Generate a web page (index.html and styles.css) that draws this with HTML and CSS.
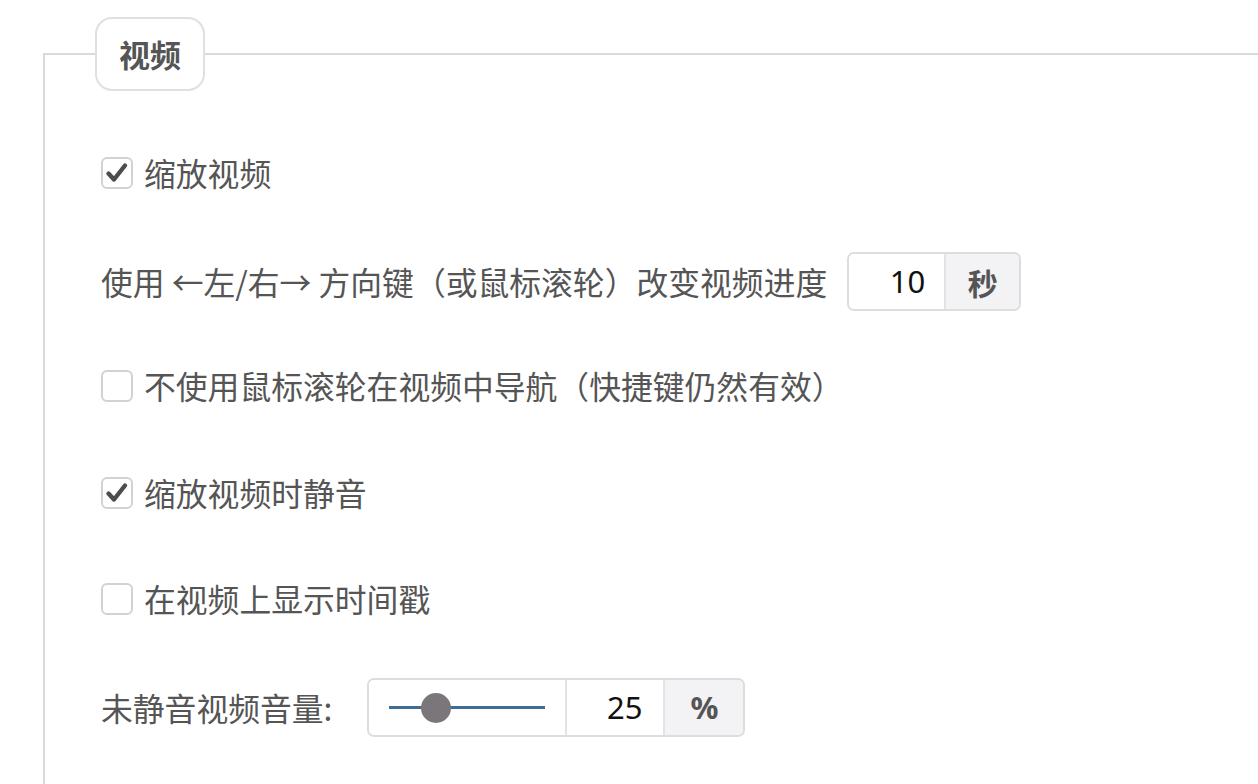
FILE: index.html
```html
<!DOCTYPE html>
<html lang="zh-CN">
<head>
<meta charset="utf-8">
<title>视频</title>
<link rel="stylesheet" href="styles.css">
</head>
<body>
<fieldset class="group">
  <legend class="group-title">视频</legend>
  <div class="rows">
    <label class="row">
      <span class="check checked"><svg viewBox="0 0 32 32" width="32" height="32"><path d="M7.5 16.5 L13 22.5 L24 8.5" fill="none" stroke="#4d4d4d" stroke-width="4.4" stroke-linecap="round" stroke-linejoin="round"/></svg></span>
      <span class="text">缩放视频</span>
    </label>
    <div class="row row-input">
      <span class="text">使用 ←左/右→ 方向键（或鼠标滚轮）改变视频进度</span>
      <span class="input-group seek-group">
        <span class="num num-seek">10</span>
        <span class="unit">秒</span>
      </span>
    </div>
    <label class="row">
      <span class="check"></span>
      <span class="text">不使用鼠标滚轮在视频中导航（快捷键仍然有效）</span>
    </label>
    <label class="row">
      <span class="check checked"><svg viewBox="0 0 32 32" width="32" height="32"><path d="M7.5 16.5 L13 22.5 L24 8.5" fill="none" stroke="#4d4d4d" stroke-width="4.4" stroke-linecap="round" stroke-linejoin="round"/></svg></span>
      <span class="text">缩放视频时静音</span>
    </label>
    <label class="row">
      <span class="check"></span>
      <span class="text">在视频上显示时间戳</span>
    </label>
    <div class="row row-input">
      <span class="text vol-label">未静音视频音量:</span>
      <span class="input-group vol-group">
        <span class="slider-cell"><input class="slider" type="range" min="0" max="100" value="25"></span>
        <span class="num num-vol">25</span>
        <span class="unit unit-pct">%</span>
      </span>
    </div>
  </div>
</fieldset>
</body>
</html>
```

FILE: styles.css
```css
html, body {
  margin: 0;
  padding: 0;
  background: #ffffff;
}
body {
  font-family: "Noto Sans CJK SC", "Noto Sans", sans-serif;
  color: #555555;
  overflow: hidden;
  height: 784px;
}
.group {
  margin: 17px -40px 0 43px;
  border: 2px solid #d9d8da;
  border-right: none;
  border-bottom: none;
  padding: 52px 0 40px 56px;
  height: 800px;
  box-sizing: border-box;
}
.group-title {
  margin-left: -6px;
  padding: 0 22px;
  height: 70px;
  border: 2px solid #e0dfe1;
  border-radius: 17px;
  background: #fff;
  font-size: 31px;
  font-weight: 700;
  line-height: 70px;
  color: #555555;
}
.rows {
  display: flex;
  flex-direction: column;
  gap: 46.6px;
}
.row {
  display: flex;
  align-items: center;
  height: 60px;
  font-size: 31.8px;
  line-height: 1;
}
.row-input {
  margin-top: 2px;
  margin-bottom: -2px;
}
.check {
  flex: none;
  box-sizing: border-box;
  width: 32px;
  height: 32px;
  border: 2px solid #d2d1d3;
  border-radius: 6px;
  background: #fff;
  margin-right: 11px;
  display: flex;
  align-items: center;
  justify-content: center;
  overflow: hidden;
}
.check svg {
  flex: none;
}
.text {
  white-space: nowrap;
}
.input-group {
  display: flex;
  align-items: stretch;
  height: 59px;
  box-sizing: border-box;
  border: 2px solid #dddcde;
  border-radius: 7px;
  overflow: hidden;
  background: #fff;
}
.seek-group {
  margin-left: 20px;
}
.vol-group {
  margin-left: 35px;
}
.num {
  display: flex;
  align-items: center;
  justify-content: flex-end;
  box-sizing: border-box;
  font-family: "Noto Sans", sans-serif;
  font-size: 31px;
  color: #111;
  background: #fff;
}
.num-seek {
  width: 95px;
  padding-right: 19px;
}
.num-vol {
  width: 98px;
  padding-right: 21px;
  border-left: 2px solid #e3e2e4;
}
.unit {
  display: flex;
  align-items: center;
  justify-content: center;
  width: 73px;
  border-left: 2px solid #e3e2e4;
  background: #f3f2f4;
  font-weight: 700;
  font-size: 30px;
  color: #555;
}
.unit-pct {
  width: 78px;
  font-family: "Noto Sans", sans-serif;
  font-size: 31px;
}
.slider-cell {
  display: flex;
  align-items: center;
  justify-content: center;
  width: 196px;
  background: #fff;
}
.slider {
  -webkit-appearance: none;
  appearance: none;
  width: 156px;
  height: 30px;
  margin: 0;
  padding: 0;
  background: transparent;
}
.slider::-webkit-slider-runnable-track {
  height: 3px;
  background: #3f6d94;
  border: none;
}
.slider::-webkit-slider-thumb {
  -webkit-appearance: none;
  appearance: none;
  width: 30px;
  height: 30px;
  margin-top: -13.5px;
  border: none;
  border-radius: 50%;
  background: #7a7679;
}
```
